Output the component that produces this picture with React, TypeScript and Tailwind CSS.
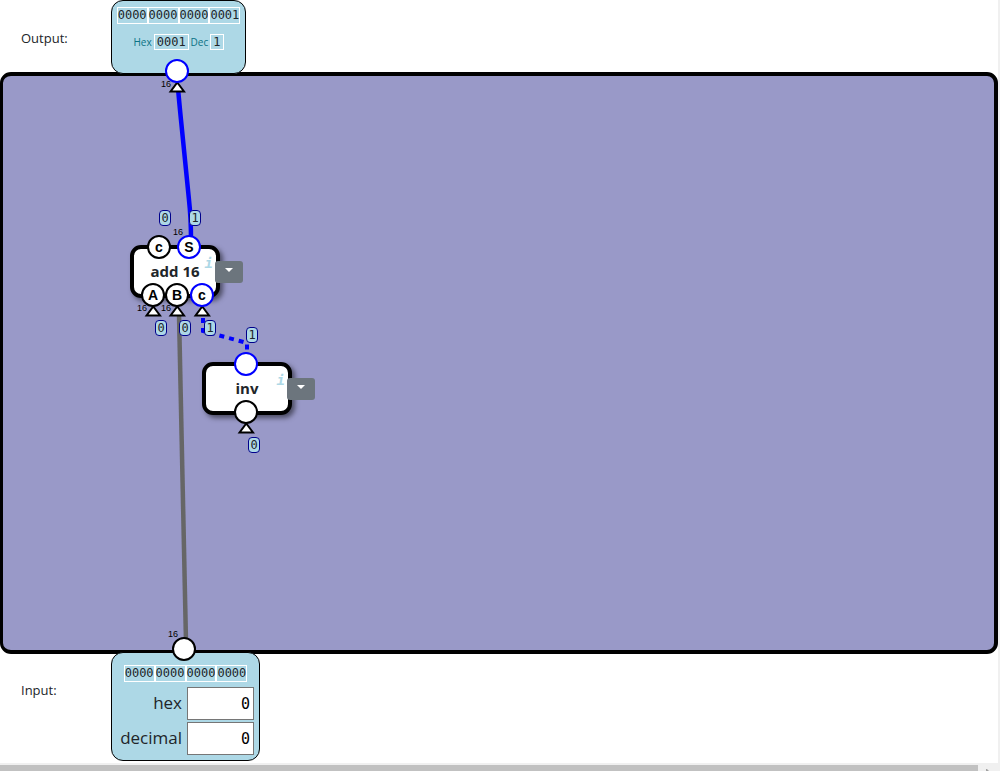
import { useState } from "react";

type PinSide = "top" | "bottom";

interface PinProps {
  name: string;
  label?: string;
  x: number;
  y: number;
  side: PinSide;
  active?: boolean;
  arrow?: boolean;
  width?: number;
  value?: string;
}

interface ChipProps {
  title: string;
  x: number;
  y: number;
  pins: PinProps[];
}

const MONO = "font-['DejaVu_Sans_Mono',monospace]";

const chips: ChipProps[] = [
  {
    title: "add 16",
    x: 127,
    y: 169,
    pins: [
      { name: "carry out", label: "c", x: 29, y: 2, side: "top", value: "0" },
      { name: "sum", label: "S", x: 59, y: 2, side: "top", value: "1", width: 16, active: true },
      { name: "A", label: "A", x: 23, y: 50, side: "bottom", value: "0", width: 16, arrow: true },
      { name: "B", label: "B", x: 47, y: 50, side: "bottom", value: "0", width: 16, arrow: true },
      { name: "carry in", label: "c", x: 72, y: 50, side: "bottom", value: "1", arrow: true, active: true },
    ],
  },
  {
    title: "inv",
    x: 199,
    y: 286,
    pins: [
      { name: "inv out", x: 44, y: 2, side: "top", value: "1", active: true },
      { name: "inv in", x: 44, y: 50, side: "bottom", value: "0", arrow: true },
    ],
  },
];

function Pin({ name, label, x, y, side, active, arrow, width, value }: PinProps) {
  return (
    <div className="absolute z-10 h-0 w-0" style={{ left: x, top: y }}>
      {width !== undefined && (
        <span
          className={`absolute font-['Liberation_Sans',sans-serif] text-[9px] leading-[10px] text-black ${
            side === "top" ? "-left-4 -top-5" : "-left-4 top-2"
          }`}
        >
          {width}
        </span>
      )}
      {arrow && (
        <svg className="absolute -left-2 top-2 overflow-visible" width="16" height="14" viewBox="0 0 16 14" aria-hidden="true">
          <path d="M8.3 3.5 L15 12.5 H1.6 Z" fill="#fff" stroke="#000" strokeWidth="2" />
        </svg>
      )}
      <button
        type="button"
        aria-label={name}
        className={`absolute -left-3 -top-3 flex h-6 w-6 items-center justify-center rounded-full border-2 bg-white font-['Liberation_Sans',sans-serif] text-[14px] leading-none font-bold text-black ${
          active ? "border-[#0000ff]" : "border-black"
        }`}
      >
        {label}
      </button>
      {value !== undefined && (
        <span
          className={`absolute left-0 flex h-4 w-3 items-center justify-center rounded-[4px] border border-[#00008b] bg-[#add8e6] text-[12px] leading-none text-[#212529] ${MONO} ${
            side === "top" ? "-top-[37px]" : "top-[25px] ml-[2px]"
          }`}
        >
          {value}
        </span>
      )}
    </div>
  );
}

function Chip({ title, x, y, pins }: ChipProps) {
  return (
    <section className="absolute h-[53px] w-[90px]" style={{ left: x, top: y }}>
      <div className="flex h-full items-center justify-center rounded-[11px] border-4 border-black bg-white pb-[2px] shadow-[3px_3px_5px_rgba(0,0,0,0.5)]">
        <h2 className="font-['Open_Sans',sans-serif] text-[15px] leading-5 font-bold text-[#212529]">{title}</h2>
      </div>
      <span className="absolute right-[7px] top-2 font-['DejaVu_Sans_Mono',monospace] text-[14px] leading-5 font-bold text-[#add8e6] italic">
        i
      </span>
      <button
        type="button"
        aria-label={`${title} menu`}
        className="absolute left-[85px] top-4 flex h-[22px] w-7 justify-center rounded-[3px] bg-[#6c757d] pt-[7px]"
      >
        <svg width="8" height="4" viewBox="0 0 8 4" aria-hidden="true">
          <path d="M0 0 H8 L4 4 Z" fill="#fff" />
        </svg>
      </button>
      {pins.map((pin) => (
        <Pin key={pin.name} {...pin} />
      ))}
    </section>
  );
}

function Bits({ value }: { value: string }) {
  const groups = value.match(/.{4}/g) ?? [];
  return (
    <div className={`flex border border-white text-[12px] leading-[15px] text-[#212529] ${MONO}`}>
      {groups.map((group, i) => (
        <span key={i} className={i > 0 ? "border-l-2 border-white" : ""}>
          {group}
        </span>
      ))}
    </div>
  );
}

function NumberField({ id, label }: { id: string; label: string }) {
  const [value, setValue] = useState("0");
  return (
    <>
      <label htmlFor={id} className="pb-[2px] text-right text-[17px] leading-6">
        {label}
      </label>
      <input
        id={id}
        value={value}
        onChange={(e) => setValue(e.target.value)}
        className={`h-[33px] w-[67px] border border-[#767676] bg-white pr-[3px] text-right text-[15px] text-black ${MONO}`}
      />
    </>
  );
}

export default function App() {
  return (
    <div className="flex min-h-screen flex-col bg-white font-['Open_Sans',sans-serif] text-[#212529]">
      <main className="flex flex-1 flex-col border-r-2 border-[#f0f0f0]">
        <header className="relative z-10 flex items-start">
          <h1 className="w-[111px] pt-7 pl-[21px] text-[13px] leading-5">Output:</h1>
          <div className="relative flex h-[74px] w-[135px] flex-col items-center rounded-[12px] border border-black bg-[#add8e6] pt-[6px]">
            <Bits value="0000000000000001" />
            <div className="mt-2 flex items-center gap-[2px] text-[10px] leading-5 text-[#0b7285]">
              <span>Hex</span>
              <output className={`border border-white px-[2px] text-[12px] leading-[14px] text-[#212529] ${MONO}`}>0001</output>
              <span>Dec</span>
              <output className={`border border-white px-[2px] text-[12px] leading-[14px] text-[#212529] ${MONO}`}>1</output>
            </div>
            <Pin name="Output" x={65} y={70} side="bottom" width={16} arrow active />
          </div>
        </header>

        <div className="relative -mt-[2px] min-h-[560px] flex-1 rounded-[11px] border-4 border-l-3 border-black bg-[#9999c8]">
          <svg className="absolute inset-0 h-full w-full overflow-visible" aria-hidden="true">
            <path d="M175 12 Q176 24 178 44 L186 124 Q188 142 188 164" fill="none" stroke="#0000ff" strokeWidth="4.5" />
            <path d="M176 238 L183 566" fill="none" stroke="#666" strokeWidth="4.5" />
            <path d="M200 242 V255 L244 267 V280" fill="none" stroke="#0000ff" strokeWidth="4" strokeDasharray="5 5" />
          </svg>
          {chips.map((chip) => (
            <Chip key={chip.title} {...chip} />
          ))}
        </div>

        <footer className="relative z-10 -mt-[2px] flex items-start">
          <h2 className="w-[111px] pt-7 pl-[21px] text-[13px] leading-5">Input:</h2>
          <div className="relative flex w-[149px] flex-col items-center rounded-[12px] border border-black bg-[#add8e6] pt-3 pb-[5px]">
            <Bits value="0000000000000000" />
            <div className="mt-[5px] grid w-full grid-cols-[1fr_auto] items-center gap-x-[5px] gap-y-[2px] pr-[5px]">
              <NumberField id="hex" label="hex" />
              <NumberField id="decimal" label="decimal" />
            </div>
            <Pin name="Input" x={72} y={-4} side="top" width={16} />
          </div>
        </footer>
        <div className="h-[2px]" />
      </main>
      <div className="flex h-2 items-end bg-[#f0f0f0]">
        <div className="h-[6px] flex-1 bg-[#c1c1c1]" />
        <div className="flex w-[22px] pl-2">
          <svg width="3" height="2" viewBox="0 0 3 2" aria-hidden="true">
            <path d="M0 0 H1 L3 2 H0 Z" fill="#a3a3a3" />
          </svg>
        </div>
      </div>
    </div>
  );
}
